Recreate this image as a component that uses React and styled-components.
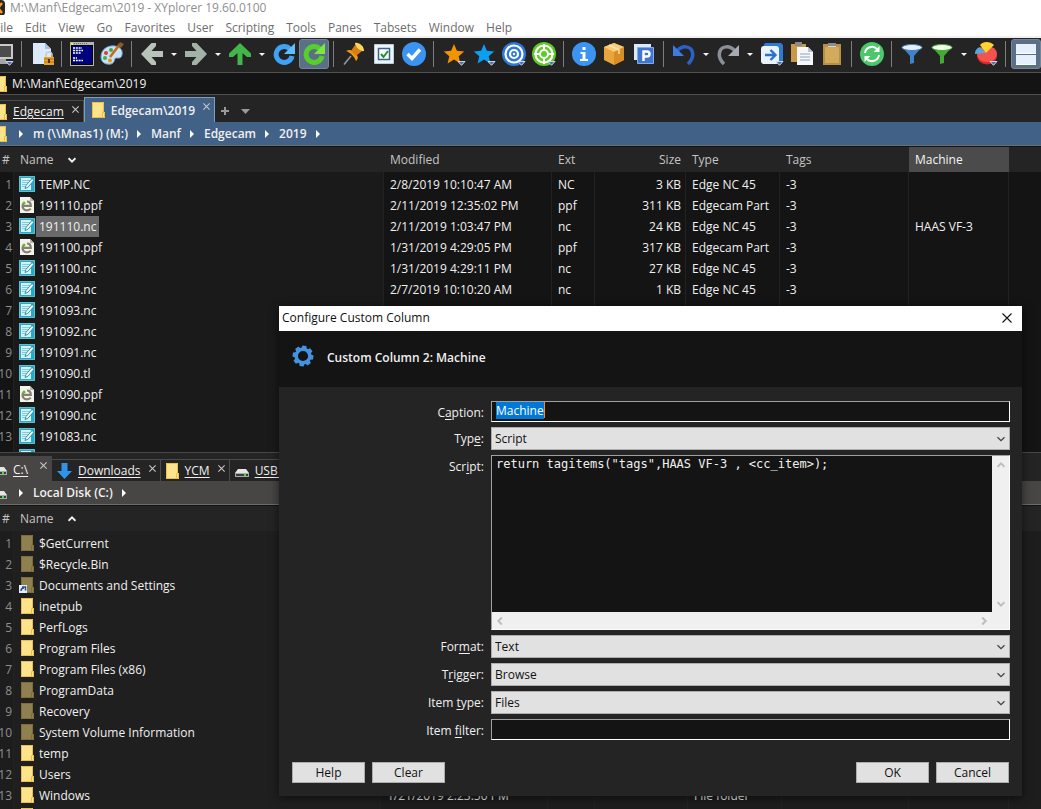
import React, { useEffect, useRef } from "react";
import styled, { createGlobalStyle, css } from "styled-components";

const GlobalStyle = createGlobalStyle`
  * {
    box-sizing: border-box;
  }
  body {
    margin: 0;
    background: #141414;
    color: #f0f0f0;
    font: 12px/16px "Open Sans", "Noto Sans", sans-serif;
    overflow: hidden;
  }
  button, input, select, textarea {
    font: inherit;
    color: inherit;
    margin: 0;
    padding: 0;
    border: 0;
    border-radius: 0;
    background: none;
  }
  svg {
    display: block;
    flex: none;
  }
`;

const Window = styled.div`
  position: relative;
  display: flex;
  flex-direction: column;
  height: 100vh;
  overflow: hidden;
`;

const TitleBar = styled.header`
  display: flex;
  align-items: center;
  gap: 5px;
  height: 15px;
  margin-left: -11px;
  background: #fff;
  color: #8f8f8f;
  white-space: nowrap;
`;

const MenuBar = styled.nav`
  display: flex;
  align-items: center;
  height: 23px;
  padding-top: 4px;
  margin-left: -12px;
  background: #fff;
  border-bottom: 2px solid #f0f0f0;
  color: #6d6d6d;
`;

const MenuItem = styled.button`
  padding: 0 6px;
`;

const Toolbar = styled.div`
  display: flex;
  flex: none;
  height: 35px;
  padding-top: 1px;
  background: #242424;
  border-bottom: 1px solid #505050;
  overflow: hidden;

  > :first-child {
    margin-left: -13px;
  }
`;

const ToolButton = styled.button`
  display: flex;
  flex: none;
  align-items: center;
  justify-content: center;
  width: 30px;
  height: 30px;
  ${(props) =>
    props.$active &&
    css`
      background: #5b7087;
      border: 1px solid #71869b;
      border-radius: 3px;
    `}
`;

const DropButton = styled.button`
  display: flex;
  flex: none;
  align-items: center;
  justify-content: center;
  width: 14px;
  height: 30px;
`;

const Divider = styled.span`
  flex: none;
  width: 1px;
  height: 26px;
  margin: 2px 5px 0 4px;
  background: #7d7d7d;
`;

const AddressBar = styled.div`
  display: flex;
  flex: none;
  align-items: center;
  gap: 5px;
  height: 22px;
  background: #141414;
  border-bottom: 1px solid #505050;
  overflow: hidden;
`;

const AddressInput = styled.input`
  flex: 1;
  outline: none;
`;

const Pane = styled.section`
  display: flex;
  flex: 1 1 0;
  flex-direction: column;
  min-height: 0;
  overflow: hidden;
`;

const TabStrip = styled.div`
  display: flex;
  flex: none;
  align-items: flex-end;
  height: ${(props) => props.$height}px;
  background: #242424;
  border-top: ${(props) => (props.$ruled ? "1px solid #484848" : "0")};
`;

const Tab = styled.div`
  display: flex;
  align-items: center;
  height: 22px;
  padding: 0 4px 0 ${(props) => (props.$first ? 0 : 5)}px;
  border: 1px solid #4c4c4c;
  border-width: 1px 1px 0 0;
  white-space: nowrap;

  ${(props) =>
    props.$active &&
    css`
      height: 25px;
      padding-left: ${props.$first ? 0 : 7}px;
      background: ${props.$active};
      border-color: ${props.$edge};
      border-left-width: ${props.$first ? 0 : 1}px;
    `}
`;

const TabLabel = styled.button`
  min-width: 33px;
  padding: 1px 8px 0 6px;
  text-align: left;
  text-decoration: ${(props) => (props.$bold ? "none" : "underline")};
  text-underline-offset: 2px;
  font-weight: ${(props) => (props.$bold ? 600 : 400)};
`;

const TabClose = styled.button`
  align-self: flex-start;
  padding: 5px 0;
`;

const StripTool = styled.button`
  display: flex;
  align-items: center;
  height: 22px;
  margin-left: ${(props) => props.$gap}px;
`;

const CutIcon = styled.span`
  display: flex;
  justify-content: flex-end;
  width: 7px;
  overflow: hidden;
`;

const Crumbs = styled.nav`
  display: flex;
  flex: none;
  align-items: center;
  height: 24px;
  background: ${(props) => props.$tone};
  border-bottom: 1px solid #6d6d6d;
  font-weight: 600;
  white-space: nowrap;

  > svg {
    margin: 0 10px 0 9px;
  }
  > ${CutIcon} {
    margin-right: 3px;
  }
`;

const Crumb = styled.button`
  font-weight: 600;
`;

const List = styled.div`
  flex: 1;
  min-height: 0;
  margin-top: 1px;
  overflow: hidden;
  background: ${(props) => props.$tone};
`;

const Table = styled.table`
  width: 100%;
  table-layout: fixed;
  border-collapse: separate;
  border-spacing: 0;
  white-space: nowrap;
`;

const HeadCell = styled.th`
  height: 25px;
  padding: 0 5px 0 6px;
  text-align: ${(props) => props.$align || "left"};
  font-weight: 400;
  color: ${(props) => (props.$lit ? "#f4f4f4" : "#c4c4c4")};
  background: ${(props) => (props.$lit ? "#4b4b4b" : "#242424")};

  &:first-child {
    padding: 0 0 0 2px;
  }
`;

const Cell = styled.td`
  height: 21px;
  padding: 0 4px 0 6px;
  border-right: 1px solid #222;
  text-align: ${(props) => props.$align || "left"};
  overflow: hidden;

  tr:first-child > & {
    height: 23px;
    padding-top: 2px;
  }
  &:first-child {
    padding-left: 0;
    padding-right: 1px;
    color: #8f8f8f;
  }
  &:nth-child(2) {
    padding-left: 5px;
    background: ${(props) => props.$tone};
  }
  &:last-child {
    border-right: 0;
  }
`;

const RowNumber = styled.span`
  display: flex;
  justify-content: flex-end;
`;

const NameLine = styled.span`
  display: flex;
  align-items: flex-start;
  height: 21px;

  > svg {
    margin-top: 2px;
  }
`;

const FileName = styled.span`
  height: 21px;
  padding: 3px 3px 2px;
  margin-left: 1px;
  background: ${(props) => (props.$selected ? "#6a6a6a" : "none")};
`;

const SortHead = styled.span`
  display: flex;
  align-items: center;
  gap: 14px;
`;

const Dialog = styled.form`
  position: absolute;
  top: 306px;
  right: 19px;
  width: 743px;
  background: #242424;
  box-shadow: 0 2px 9px rgba(0, 0, 0, 0.55);
`;

const DialogTitle = styled.div`
  display: flex;
  align-items: center;
  justify-content: space-between;
  height: 25px;
  padding: 0 10px 1px 3px;
  background: #fff;
  color: #111;
`;

const DialogHead = styled.div`
  display: flex;
  align-items: center;
  gap: 13px;
  height: 56px;
  padding: 0 13px 6px;
  background: #141414;
`;

const DialogHeading = styled.h1`
  margin: 4px 0 0;
  font-size: 12px;
  line-height: 16px;
  font-weight: 600;
`;

const Fields = styled.div`
  display: grid;
  grid-template-columns: 205px 1fr;
  gap: 5px 7px;
  padding: 14px 12px 22px 0;
`;

const Label = styled.label`
  padding-top: 4px;
  text-align: right;
  height: 21px;

  u {
    text-underline-offset: 2px;
  }
`;

const sunken = css`
  border: 1px solid #fff;
  border-color: #a0a0a0 #fff #fff #a0a0a0;
  background: #141414;
`;

const TextField = styled.input`
  ${sunken}
  display: block;
  width: 100%;
  height: 21px;
  padding: 0 4px 3px;
  outline: none;

  &::selection {
    background: #0078d7;
    color: #fff;
  }
`;

const CaptionBox = styled.div`
  position: relative;
`;

const Caret = styled.span`
  position: absolute;
  top: 1px;
  left: 53px;
  width: 1px;
  height: 16px;
  background: #ff8728;
`;

const SelectBox = styled.div`
  display: grid;
  align-items: center;

  > * {
    grid-area: 1 / 1;
  }
  > svg {
    justify-self: end;
    margin-right: 5px;
    pointer-events: none;
  }
`;

const Select = styled.select`
  appearance: none;
  width: 100%;
  height: 23px;
  padding: 0 3px;
  border: 1px solid #adadad;
  background: #e1e1e1;
  color: #111;
`;

const ScriptBox = styled.div`
  ${sunken}
  display: grid;
  grid-template-columns: 1fr 17px;
  grid-template-rows: 156px 17px;
`;

const ScriptText = styled.textarea`
  padding: 1px 4px;
  resize: none;
  outline: none;
  overflow: hidden;
  font-family: "DejaVu Sans Mono", monospace;
  line-height: 14px;
  white-space: pre;
`;

const ScrollTrack = styled.div`
  display: flex;
  flex-direction: ${(props) => (props.$vertical ? "column" : "row")};
  align-items: center;
  justify-content: space-between;
  padding: ${(props) => (props.$vertical ? "5px 0 4px" : "0 4px")};
  background: #f0f0f0;
`;

const ScrollCorner = styled.div`
  background: #f0f0f0;
`;

const DialogButtons = styled.div`
  display: flex;
  gap: 7px;
  padding: 0 13px 13px;
`;

const PushButton = styled.button`
  width: 73px;
  height: 21px;
  margin-left: ${(props) => (props.$push ? "auto" : 0)};
  border: 1px solid #adadad;
  background: #e1e1e1;
  color: #111;
`;

/* ---------- icons ---------- */

const Icon = ({ children, size = 24, box = 24 }) => (
  <svg width={size} height={size} viewBox={`0 0 ${box} ${box}`} aria-hidden="true">
    {children}
  </svg>
);

const Badge = () => (
  <path d="M16 19.500h7l-3.500 3.800z" fill="#4a6fb5" stroke="#dde5f2" strokeWidth="0.9" />
);

const Chevron = ({ dir = "down", color = "#444", width = 8, weight = 1.3 }) => {
  const turn = { down: 0, left: 90, up: 180, right: 270 }[dir];
  return (
    <svg width={width} height={width} viewBox="0 0 8 8" aria-hidden="true">
      <path
        d="M0.500 2.200L4 5.700L7.500 2.200"
        fill="none"
        stroke={color}
        strokeWidth={weight}
        transform={`rotate(${turn} 4 4)`}
      />
    </svg>
  );
};

const CrumbArrow = () => (
  <svg width="4" height="8" viewBox="0 0 4 8" aria-hidden="true">
    <path d="M0 0L4 4L0 8z" fill="#fff" />
  </svg>
);

const DropArrow = () => (
  <svg width="6" height="3" viewBox="0 0 6 3" aria-hidden="true">
    <path d="M0 0h6L3 3z" fill="#f4f4f4" />
  </svg>
);

const Cross = ({ size = 7, color = "#c8c8c8" }) => (
  <svg width={size} height={size} viewBox="0 0 10 10" aria-hidden="true">
    <path d="M0.500 0.500l9 9M9.500 0.500l-9 9" stroke={color} strokeWidth={size > 9 ? 1.1 : 1.5} />
  </svg>
);

const Folder = ({ dim, link }) => (
  <svg width="16" height="16" viewBox="0 0 16 16" aria-hidden="true">
    <path d="M2 0h12v10h1v6H2z" fill={dim ? "#8f8052" : "#fde38b"} />
    <path
      d="M2.500 15.500V0.500H13.500V10.500M12.500 15.500V10.500H14.500V15.500H2.500"
      fill="none"
      stroke={dim ? "#806d35" : "#e9bf4a"}
    />
    {link && (
      <g>
        <path d="M0 8h8v8H0z" fill="#e8eef7" />
        <path d="M2 14c0-2 1-3 3-3M3 10h3.500v3.500" fill="none" stroke="#23508e" strokeWidth="1.500" />
      </g>
    )}
  </svg>
);

const FolderTab = () => (
  <svg width="13" height="16" viewBox="0 0 13 16" aria-hidden="true">
    <path d="M0 0h12v10h1v6H0z" fill="#fde38b" />
    <path d="M0.500 15.500V0.500H11.500V10.500M10.500 15.500V10.500H12.500V15.500H0.500" fill="none" stroke="#e9bf4a" />
  </svg>
);

const Drive = () => (
  <svg width="14" height="16" viewBox="0 0 14 16" aria-hidden="true">
    <path d="M3 6h8l3 4H0z" fill="#e6e6e6" />
    <path d="M0 10h14v4H0z" fill="#a9a9a9" />
    <path d="M1 11h12v2H1z" fill="#3e3e3e" />
    <path d="M9 11h2v2H9z" fill="#2ee62e" />
  </svg>
);

const DownArrow = () => (
  <svg width="15" height="16" viewBox="0 0 15 16" aria-hidden="true">
    <path d="M4.500 0h6v8H15l-7.500 8L0 8h4.500z" fill="#2f94e8" />
  </svg>
);

const NoteFile = () => (
  <svg width="16" height="16" viewBox="0 0 16 16" aria-hidden="true">
    <path d="M0 0h16v16H0z" fill="#26a9c4" />
    <path d="M0.500 0.500h15v15h-15z" fill="none" stroke="#5cc0d0" />
    <path d="M2 2h10v12H2z" fill="#d6f2f6" />
    <path d="M3 4.500h8M3 6.500h7M3 8.500h5M3 10.500h3" stroke="#6cc3d2" strokeWidth="0.8" />
    <path d="M6 12.500l1-3 6-7 2 1.700-6 7z" fill="#fff" stroke="#168ba8" strokeWidth="0.9" />
  </svg>
);

const PartFile = () => (
  <svg width="16" height="16" viewBox="0 0 16 16" aria-hidden="true">
    <path d="M1 0h10l4 4v12H1z" fill="#f2f2ee" />
    <path d="M11 0v4h4z" fill="#b7b5aa" />
    <path
      d="M3.500 8.800h8.300c0-3-1.600-4.300-3.800-4.300M4 6.500c-1.300 4.300 0.600 6.800 3.800 6.800 1.800 0 3-0.500 4-1.500"
      fill="none"
      stroke="#85826f"
      strokeWidth="2.200"
    />
    <circle cx="5" cy="6" r="1.500" fill="#5fc01c" />
  </svg>
);

const Gear = () => (
  <svg width="22" height="22" viewBox="0 0 22 22" aria-hidden="true">
    <g fill="#4393e0">
      {[0, 45, 90, 135, 180, 225, 270, 315].map((deg) => (
        <path key={deg} d="M8.200 4L9 0.600h4L13.800 4z" transform={`rotate(${deg + 8} 11 11)`} />
      ))}
    </g>
    <circle cx="11" cy="11" r="6.800" fill="none" stroke="#4393e0" strokeWidth="3.400" />
  </svg>
);

const STAR = "M12 2l2.900 6.800 7.300 0.600-5.500 4.800 1.700 7.200L12 17.600 5.600 21.400l1.700-7.200L1.800 9.400l7.300-0.600z";

const icons = {
  monitor: (
    <>
      <path d="M2 2h21v15H2z" fill="#c9c9c9" />
      <path d="M4 4h17v11H4z" fill="#4c4c4c" />
      <path d="M9 17h7v3h3v2H6v-2h3z" fill="#a5a5a5" />
      <Badge />
    </>
  ),
  lock: (
    <>
      <path d="M3 1h12l6 6v15H3z" fill="#dce9fb" />
      <path d="M15 1v6h6z" fill="#a4c1ea" />
      <path d="M16 15v-2a3 3 0 0 1 6 0v2" fill="none" stroke="#c9c9c9" strokeWidth="1.600" />
      <path d="M14 15h10v8H14z" fill="#eaa428" />
      <path d="M14 17h10M14 20h10" stroke="#b87411" />
      <path d="M18 17h2v4h-2z" fill="#4d3208" />
    </>
  ),
  console: (
    <>
      <path d="M0 0h24v24H0z" fill="#b5b5b5" />
      <path d="M1 3h22v20H1z" fill="#000" />
      <path d="M1 1h2v2H1z" fill="#f5e829" />
      <path d="M4 1.500h14" stroke="#6e6e6e" strokeDasharray="1 1" />
      <path d="M2 4h20v18H2z" fill="#00007f" />
      <path d="M3 6h9M3 8.500h10M3 11h8M3 16h4M3 18.500h10" stroke="#fff" strokeWidth="1.300" strokeDasharray="2 0.8" />
    </>
  ),
  palette: (
    <>
      <path d="M1 15C1 7 8 3 15 4c6 1 8 5 7 9s-4 3-6 3-1 5-5 6C5 23 1 20 1 15z" fill="#c8e2f6" stroke="#6f9fc7" />
      <circle cx="6" cy="11" r="2" fill="#e23b2e" />
      <circle cx="11" cy="8" r="2" fill="#4aa63b" />
      <circle cx="5" cy="16" r="2" fill="#38b449" />
      <circle cx="10" cy="18.500" r="2" fill="#f08b1e" />
      <path d="M10 15L20 2" stroke="#c46a1a" strokeWidth="2.500" />
      <path d="M18 4l2-4 4 2-3 4z" fill="#8a5a2c" />
    </>
  ),
  back: <path d="M1 12L11.500 1h4.500v3L11.500 9H23v6H11.500l4.500 5v3h-4.500z" fill="#b9c3b9" />,
  forward: <path d="M23 12L12.500 1H8v3l4.500 5H1v6h11.500L8 20v3h4.500z" fill="#a3b2a6" />,
  up: <path d="M12 1L1 11.500V15h4l4.500-4v12h5V11l4.500 4h4v-3.500z" fill="#43b649" />,
  reloadBlue: (
    <>
      <path d="M18 7a8 8 0 1 0 2 7" fill="none" stroke="#3fa2f4" strokeWidth="5" />
      <path d="M23 1v11H12z" fill="#62bdfb" />
    </>
  ),
  reloadGreen: (
    <>
      <path d="M18 7a8 8 0 1 0 2 7" fill="none" stroke="#55cf2c" strokeWidth="5" />
      <path d="M23 1v11H12z" fill="#7ce83f" />
    </>
  ),
  pin: (
    <>
      <path d="M9 14l-7 8.500" stroke="#9a9a9a" strokeWidth="1.500" />
      <path d="M4 9c4-2 6-1 9 2s4 5 1 8c-2-5-5-8-10-10z" fill="#f39a12" />
      <path d="M9 9l4-6 7 6-6 5z" fill="#d97f10" />
      <path d="M13 1c4-1 9 3 9 8-3 1-9-4-9-8z" fill="#ffd45e" />
    </>
  ),
  form: (
    <>
      <path d="M2.500 2.500h19v19h-19z" fill="#eef5fc" stroke="#b9cbdf" />
      <path d="M6.500 6.500h11v11h-11z" fill="#fff" stroke="#3b6387" strokeWidth="1.500" />
      <path d="M9 12l2.500 3L16 9" fill="none" stroke="#17962a" strokeWidth="2" />
    </>
  ),
  done: (
    <>
      <circle cx="12" cy="12" r="12" fill="#3b94f2" />
      <path d="M5.500 12l4.500 4.500 8-9" fill="none" stroke="#fff" strokeWidth="3.500" />
    </>
  ),
  starOrange: (
    <>
      <path d={STAR} fill="#f29400" />
      <Badge />
    </>
  ),
  starBlue: (
    <>
      <path d={STAR} fill="#0c9ff0" />
      <Badge />
    </>
  ),
  target: (
    <>
      <circle cx="12" cy="12" r="12" fill="#2f78d8" />
      <circle cx="12" cy="12" r="8.500" fill="none" stroke="#fff" strokeWidth="2.200" />
      <circle cx="12" cy="12" r="4" fill="none" stroke="#fff" strokeWidth="2.200" />
      <circle cx="12" cy="12" r="1.200" fill="#fff" />
      <Badge />
    </>
  ),
  crosshair: (
    <>
      <circle cx="12" cy="12" r="12" fill="#5fcb25" />
      <circle cx="12" cy="12" r="8.500" fill="none" stroke="#fff" strokeWidth="2.200" />
      <circle cx="12" cy="12" r="4" fill="none" stroke="#fff" strokeWidth="2" />
      <path d="M12 2v7M12 15v7M2 12h7M15 12h7" stroke="#fff" strokeWidth="2" />
      <Badge />
    </>
  ),
  info: (
    <>
      <circle cx="12" cy="12" r="12" fill="#3b94f2" />
      <path d="M10.500 5h3v3h-3zM8.500 10h5v7h2.500v2H8v-2h2.500v-5h-2z" fill="#fff" />
    </>
  ),
  box: (
    <>
      <path d="M12 1l10 4v13l-10 5L2 18V5z" fill="#e9a53b" />
      <path d="M12 1l10 4-10 5L2 5z" fill="#f8cd7a" />
      <path d="M12 10l10-5v13l-10 5z" fill="#d98e25" />
      <path d="M7 3l10 5v4" fill="none" stroke="#fbe2ac" strokeWidth="1.500" />
    </>
  ),
  park: (
    <>
      <path d="M2 2h17v16H2z" fill="#dce9fb" />
      <path d="M5.500 5.500h16v16h-16z" fill="#3f76cf" stroke="#86abe6" />
      <path d="M11.500 19V9.500H15a2.500 2.500 0 0 1 0 5h-3.500" fill="none" stroke="#fff" strokeWidth="2.500" />
    </>
  ),
  undo: (
    <>
      <path d="M5 9c5-6 13-5 15 0s0 9-4 13" fill="none" stroke="#2b62c9" strokeWidth="3.500" />
      <path d="M1 3v11h11z" fill="#3f7be0" />
    </>
  ),
  redo: (
    <>
      <path d="M19 9C14 3 6 4 4 9s0 9 4 13" fill="none" stroke="#8b8f98" strokeWidth="3.500" />
      <path d="M23 3v11H12z" fill="#a7abb3" />
    </>
  ),
  goto: (
    <>
      <path d="M5 1h16l2 2v16h-4L3 5z" fill="#2f7bd4" />
      <rect x="1" y="4" width="18" height="18" rx="3" fill="#e9f2fd" />
      <path d="M5 13h10M10.500 8l5 5-5 5" fill="none" stroke="#2b6fd0" strokeWidth="2.400" />
      <Badge />
    </>
  ),
  paste: (
    <>
      <path d="M1 2h15v18H1z" fill="#c99a45" />
      <path d="M5 0h7v4H5z" fill="#8a8a8a" />
      <path d="M7 5h11l5 5v13H7z" fill="#f5f7fb" />
      <path d="M18 5v5h5z" fill="#b9c2d0" />
      <path d="M10 12h10M10 15h10M10 18h10" stroke="#8ea3c4" />
    </>
  ),
  clipboard: (
    <>
      <path d="M3 2h18v21H3z" fill="#b98f43" />
      <path d="M5 5h14v16H5z" fill="#d3ab5c" />
      <path d="M8 1h8v4H8z" fill="#8d8d8d" />
      <path d="M8 4.500h8" stroke="#d5d5d5" />
    </>
  ),
  sync: (
    <>
      <circle cx="12" cy="12" r="12" fill="#4cc76b" />
      <path d="M5 11a7 7 0 0 1 12-4M19 13a7 7 0 0 1-12 4" fill="none" stroke="#fff" strokeWidth="2" />
      <path d="M19.500 4v6h-6zM4.500 20v-6h6z" fill="#fff" />
    </>
  ),
  filterBlue: (
    <>
      <path d="M2 5l8 9v8l4-1v-7l8-9z" fill="#3f82c8" />
      <ellipse cx="12" cy="5.500" rx="10" ry="3" fill="#e8f1fb" stroke="#3f82c8" />
    </>
  ),
  filterGreen: (
    <>
      <path d="M2 5l8 9v8l4-1v-7l8-9z" fill="#43ab35" />
      <ellipse cx="12" cy="5.500" rx="10" ry="3" fill="#f0fbec" stroke="#43ab35" />
    </>
  ),
  pie: (
    <>
      <ellipse cx="13" cy="14" rx="10" ry="8.500" fill="#d42a2a" />
      <ellipse cx="13" cy="12" rx="10" ry="8" fill="#f4534d" />
      <path d="M12 11L1 12c0-4 2-6 5-7z" fill="#5aa5dc" />
      <path d="M12 11L6 3c3-4 10-4 14 0z" fill="#ffd430" />
      <Badge />
    </>
  ),
  split: (
    <>
      <path d="M2 2h20v9H2zM2 13h20v9H2z" fill="#e6effc" />
      <path d="M2 11.500h20M2 22.500h20" stroke="#fff" />
    </>
  ),
};

/* ---------- data ---------- */

const menu = [
  "File", "Edit", "View", "Go", "Favorites", "User", "Scripting",
  "Tools", "Panes", "Tabsets", "Window", "Help",
];

// "|" is a divider, "v" a drop-down arrow, a leading "*" marks a pressed button
const tools = [
  "monitor", "|", "lock", "|", "console", "palette", "|", "back", "v",
  "forward", "v", "up", "v", "reloadBlue", "*reloadGreen", "|", "pin",
  "form", "done", "|", "starOrange", "starBlue", "target", "crosshair", "|",
  "info", "box", "park", "|", "undo", "v", "redo", "v", "goto", "paste",
  "clipboard", "|", "sync", "|", "filterBlue", "filterGreen", "v", "pie",
  "|", "*split",
];

const files = [
  ["TEMP.NC", "2/8/2019 10:10:47 AM", "NC", "3 KB", "Edge NC 45", "-3"],
  ["191110.ppf", "2/11/2019 12:35:02 PM", "ppf", "311 KB", "Edgecam Part", "-3"],
  ["191110.nc", "2/11/2019 1:03:47 PM", "nc", "24 KB", "Edge NC 45", "-3", "HAAS VF-3"],
  ["191100.ppf", "1/31/2019 4:29:05 PM", "ppf", "317 KB", "Edgecam Part", "-3"],
  ["191100.nc", "1/31/2019 4:29:11 PM", "nc", "27 KB", "Edge NC 45", "-3"],
  ["191094.nc", "2/7/2019 10:10:20 AM", "nc", "1 KB", "Edge NC 45", "-3"],
  ["191093.nc"],
  ["191092.nc"],
  ["191091.nc"],
  ["191090.tl"],
  ["191090.ppf"],
  ["191090.nc"],
  ["191083.nc"],
  [""],
];

const folders = [
  ["$GetCurrent"],
  ["$Recycle.Bin"],
  ["Documents and Settings"],
  ["inetpub"],
  ["PerfLogs"],
  ["Program Files"],
  ["Program Files (x86)"],
  ["ProgramData"],
  ["Recovery"],
  ["System Volume Information"],
  ["temp"],
  ["Users"],
  ["Windows", "1/21/2019 2:23:50 PM", "", "", "File folder"],
  [""],
];

const hiddenFolders = [
  "$GetCurrent", "$Recycle.Bin", "Documents and Settings", "ProgramData",
  "Recovery", "System Volume Information",
];

const fileIcon = (name) => (name.endsWith(".ppf") ? <PartFile /> : <NoteFile />);
const folderIcon = (name) => (
  <Folder dim={hiddenFolders.includes(name)} link={name === "Documents and Settings"} />
);

const columns = ["Modified", "Ext", "Size", "Type", "Tags", "Machine"];

function FileTable({ rows, widths, icon, sort, selected, tone, lit }) {
  return (
    <Table>
      <colgroup>
        {widths.map((width, i) => (
          <col key={i} width={width} />
        ))}
        <col />
      </colgroup>
      <thead>
        <tr>
          <HeadCell>#</HeadCell>
          <HeadCell>
            <SortHead>
              Name
              <Chevron dir={sort} color="#f0f0f0" weight={2} />
            </SortHead>
          </HeadCell>
          {columns.map((name) => (
            <HeadCell key={name} $align={name === "Size" ? "right" : "left"} $lit={name === lit}>
              {name}
            </HeadCell>
          ))}
          <HeadCell />
        </tr>
      </thead>
      <tbody>
        {rows.map(([name, ...rest], i) => (
          <tr key={i}>
            <Cell>
              <RowNumber>{i + 1}</RowNumber>
            </Cell>
            <Cell $tone={tone}>
              <NameLine>
                {icon(name)}
                <FileName $selected={name === selected}>{name}</FileName>
              </NameLine>
            </Cell>
            {columns.map((column, c) => (
              <Cell key={column} $align={column === "Size" ? "right" : "left"}>
                {rest[c]}
              </Cell>
            ))}
            <Cell />
          </tr>
        ))}
      </tbody>
    </Table>
  );
}

function CloseTab() {
  return (
    <TabClose aria-label="Close tab">
      <Cross />
    </TabClose>
  );
}

function Dropdown({ id, value }) {
  return (
    <SelectBox>
      <Select id={id} defaultValue={value}>
        <option>{value}</option>
      </Select>
      <Chevron />
    </SelectBox>
  );
}

function ColumnDialog() {
  const caption = useRef(null);

  useEffect(() => {
    caption.current.focus();
    caption.current.select();
  }, []);

  return (
    <Dialog role="dialog" aria-label="Configure Custom Column" onSubmit={(e) => e.preventDefault()}>
      <DialogTitle>
        Configure Custom Column
        <button type="button" aria-label="Close">
          <Cross size={10} color="#111" />
        </button>
      </DialogTitle>
      <DialogHead>
        <Gear />
        <DialogHeading>Custom Column 2: Machine</DialogHeading>
      </DialogHead>
      <Fields>
        <Label htmlFor="caption">C<u>a</u>ption:</Label>
        <CaptionBox>
          <TextField id="caption" ref={caption} defaultValue="Machine" />
          <Caret />
        </CaptionBox>
        <Label htmlFor="type">Typ<u>e</u>:</Label>
        <Dropdown id="type" value="Script" />
        <Label htmlFor="script">Scr<u>i</u>pt:</Label>
        <ScriptBox>
          <ScriptText
            id="script"
            spellCheck={false}
            defaultValue={'return tagitems("tags",HAAS VF-3 , <cc_item>);'}
          />
          <ScrollTrack $vertical>
            <Chevron dir="up" color="#bdbdbd" weight={2} />
            <Chevron dir="down" color="#bdbdbd" weight={2} />
          </ScrollTrack>
          <ScrollTrack>
            <Chevron dir="left" color="#bdbdbd" weight={2} />
            <Chevron dir="right" color="#bdbdbd" weight={2} />
          </ScrollTrack>
          <ScrollCorner />
        </ScriptBox>
        <Label htmlFor="format">For<u>m</u>at:</Label>
        <Dropdown id="format" value="Text" />
        <Label htmlFor="trigger">T<u>r</u>igger:</Label>
        <Dropdown id="trigger" value="Browse" />
        <Label htmlFor="itemtype">Item <u>t</u>ype:</Label>
        <Dropdown id="itemtype" value="Files" />
        <Label htmlFor="filter">Item <u>f</u>ilter:</Label>
        <TextField id="filter" />
      </Fields>
      <DialogButtons>
        <PushButton type="button">Help</PushButton>
        <PushButton type="button">Clear</PushButton>
        <PushButton type="submit" $push>OK</PushButton>
        <PushButton type="button">Cancel</PushButton>
      </DialogButtons>
    </Dialog>
  );
}

function App() {
  return (
    <>
      <GlobalStyle />
      <Window>
        <TitleBar>
          <Icon size={16} box={16}>
            <rect width="16" height="16" rx="4" fill="#2b2622" />
            <path d="M5 3l8 10M13 3L5 13" stroke="#f59a1b" strokeWidth="2.500" />
          </Icon>
          M:\Manf\Edgecam\2019 - XYplorer 19.60.0100
        </TitleBar>
        <MenuBar>
          {menu.map((item) => (
            <MenuItem key={item}>{item}</MenuItem>
          ))}
        </MenuBar>
        <Toolbar>
          {tools.map((tool, i) => {
            if (tool === "|") return <Divider key={i} />;
            if (tool === "v") {
              return (
                <DropButton key={i} aria-label="More">
                  <DropArrow />
                </DropButton>
              );
            }
            const name = tool.replace("*", "");
            return (
              <ToolButton key={i} aria-label={name} $active={tool !== name}>
                <Icon>{icons[name]}</Icon>
              </ToolButton>
            );
          })}
        </Toolbar>
        <AddressBar>
          <CutIcon>
            <FolderTab />
          </CutIcon>
          <AddressInput aria-label="Address" defaultValue="M:\Manf\Edgecam\2019" />
        </AddressBar>

        <Pane>
          <TabStrip $height={27}>
            <Tab $first>
              <CutIcon>
                <FolderTab />
              </CutIcon>
              <TabLabel>Edgecam</TabLabel>
              <CloseTab />
            </Tab>
            <Tab $active="#426187" $edge="#7f9dc0">
              <FolderTab />
              <TabLabel $bold>Edgecam\2019</TabLabel>
              <CloseTab />
            </Tab>
            <StripTool $gap={6} aria-label="New tab">
              <Icon size={8} box={8}>
                <path d="M4 0v8M0 4h8" stroke="#9a9a9a" strokeWidth="2" />
              </Icon>
            </StripTool>
            <StripTool $gap={12} aria-label="Tab list">
              <svg width="9" height="5" viewBox="0 0 9 5" aria-hidden="true">
                <path d="M0 0h9L4.500 5z" fill="#9a9a9a" />
              </svg>
            </StripTool>
          </TabStrip>
          <Crumbs $tone="#426187">
            <CutIcon>
              <FolderTab />
            </CutIcon>
            <CrumbArrow />
            <Crumb>m (\\Mnas1) (M:)</Crumb>
            <CrumbArrow />
            <Crumb>Manf</Crumb>
            <CrumbArrow />
            <Crumb>Edgecam</Crumb>
            <CrumbArrow />
            <Crumb>2019</Crumb>
            <CrumbArrow />
          </Crumbs>
          <List $tone="#141414">
            <FileTable
              rows={files}
              widths={[14, 370, 168, 43, 91, 94, 129, 100]}
              icon={fileIcon}
              sort="down"
              selected="191110.nc"
              tone="#1a1a1a"
              lit="Machine"
            />
          </List>
        </Pane>

        <Pane>
          <TabStrip $height={29} $ruled>
            <Tab $first $active="#484644" $edge="#484644">
              <CutIcon>
                <Drive />
              </CutIcon>
              <TabLabel>C:\</TabLabel>
              <CloseTab />
            </Tab>
            <Tab>
              <DownArrow />
              <TabLabel>Downloads</TabLabel>
              <CloseTab />
            </Tab>
            <Tab>
              <FolderTab />
              <TabLabel>YCM</TabLabel>
              <CloseTab />
            </Tab>
            <Tab>
              <Drive />
              <TabLabel>USB (E:)</TabLabel>
              <CloseTab />
            </Tab>
          </TabStrip>
          <Crumbs $tone="#484644">
            <CutIcon>
              <Drive />
            </CutIcon>
            <CrumbArrow />
            <Crumb>Local Disk (C:)</Crumb>
            <CrumbArrow />
          </Crumbs>
          <List $tone="#1d1d1d">
            <FileTable
              rows={folders}
              widths={[14, 367, 167, 47, 93, 94, 127, 100]}
              icon={folderIcon}
              sort="up"
              tone="#1f1f1f"
            />
          </List>
        </Pane>

        <ColumnDialog />
      </Window>
    </>
  );
}

export default App;
